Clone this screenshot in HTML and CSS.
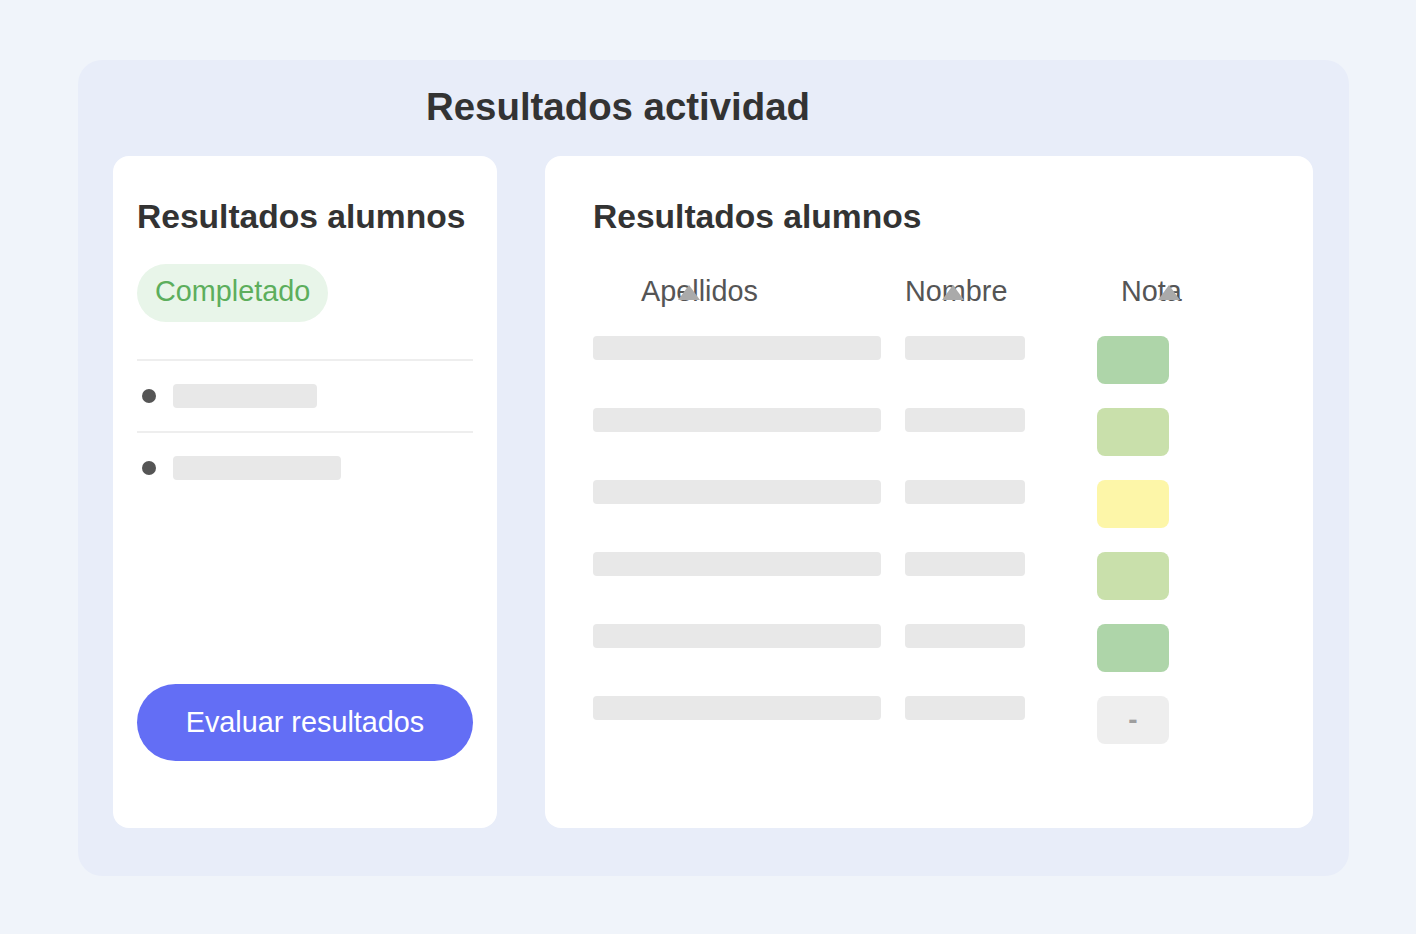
FILE: index.html
```html
<!DOCTYPE html>
<html lang="es">
<head>
<meta charset="utf-8">
<title>Resultados actividad</title>
<link rel="stylesheet" href="styles.css">
</head>
<body>
<main class="panel">
  <h1 class="panel-title">Resultados actividad</h1>
  <div class="panel-grid">
    <section class="card card-summary">
      <h2 class="card-title">Resultados alumnos</h2>
      <div class="status-row">
        <span class="badge badge-done">Completado</span>
      </div>
      <ul class="summary-list">
        <li class="summary-item"><span class="dot"></span><span class="bar bar-w144"></span></li>
        <li class="summary-item"><span class="dot"></span><span class="bar bar-w168"></span></li>
      </ul>
      <button class="btn-primary" type="button">Evaluar resultados</button>
    </section>

    <section class="card card-table">
      <h2 class="card-title">Resultados alumnos</h2>
      <div class="results">
        <div class="results-head">
          <div class="th th-apellidos"><span class="sortable">Apellidos<svg class="sort-arrow" width="22" height="15" viewBox="0 0 22 15"><polygon points="11,0 22,15 0,15" fill="#aaaaaa"/></svg></span></div>
          <div class="th"><span class="sortable">Nombre<svg class="sort-arrow" width="22" height="15" viewBox="0 0 22 15"><polygon points="11,0 22,15 0,15" fill="#aaaaaa"/></svg></span></div>
          <div class="th th-nota"><span class="sortable">Nota<svg class="sort-arrow" width="22" height="15" viewBox="0 0 22 15"><polygon points="11,0 22,15 0,15" fill="#aaaaaa"/></svg></span></div>
        </div>
        <div class="results-row">
          <span class="bar bar-surname"></span><span class="bar bar-name"></span><span class="grade grade-high"></span>
        </div>
        <div class="results-row">
          <span class="bar bar-surname"></span><span class="bar bar-name"></span><span class="grade grade-good"></span>
        </div>
        <div class="results-row">
          <span class="bar bar-surname"></span><span class="bar bar-name"></span><span class="grade grade-mid"></span>
        </div>
        <div class="results-row">
          <span class="bar bar-surname"></span><span class="bar bar-name"></span><span class="grade grade-good"></span>
        </div>
        <div class="results-row">
          <span class="bar bar-surname"></span><span class="bar bar-name"></span><span class="grade grade-high"></span>
        </div>
        <div class="results-row">
          <span class="bar bar-surname"></span><span class="bar bar-name"></span><span class="grade grade-none">-</span>
        </div>
      </div>
    </section>
  </div>
</main>
</body>
</html>
```

FILE: styles.css
```css
* {
  box-sizing: border-box;
}

html,
body {
  margin: 0;
  padding: 0;
}

body {
  background: #f0f4fa;
  font-family: "Liberation Sans", Arial, Helvetica, sans-serif;
  color: #333333;
  padding: 60px 67px 58px 78px;
}

.panel {
  width: 1271px;
  height: 816px;
  background: #e8edf9;
  border-radius: 24px;
  padding: 25px 36px 48px 35px;
  display: flex;
  flex-direction: column;
}

.panel-title {
  margin: 0 0 27px;
  padding-left: 313px;
  font-size: 38.4px;
  line-height: 44px;
  font-weight: 700;
  color: #333333;
}

.panel-grid {
  flex: 1;
  display: grid;
  grid-template-columns: 384px 768px;
  column-gap: 48px;
}

.card {
  background: #ffffff;
  border-radius: 16px;
  padding: 24px;
  display: flex;
  flex-direction: column;
}

.card-table {
  padding: 24px 48px;
}

.card-title {
  margin: 17px 0 0;
  font-size: 33.6px;
  line-height: 40px;
  font-weight: 700;
  color: #333333;
}

/* status badge */
.status-row {
  margin-top: 27px;
}

.badge {
  display: inline-flex;
  align-items: center;
  height: 58px;
  padding: 0 18px 4px;
  border-radius: 29px;
  font-size: 28.8px;
}

.badge-done {
  background: #e8f5e9;
  color: #5cae5c;
}

/* summary list */
.summary-list {
  list-style: none;
  margin: 37px 0 0;
  padding: 0;
}

.summary-item {
  display: flex;
  align-items: center;
  border-top: 2px solid #eeeeee;
  padding: 23px 0 23px;
}

.dot {
  width: 14px;
  height: 14px;
  border-radius: 50%;
  background: #555555;
  margin-left: 5px;
  margin-right: 17px;
  flex: none;
}

.bar {
  display: block;
  height: 24px;
  border-radius: 4px;
  background: #e8e8e8;
}

.bar-w144 {
  width: 144px;
}

.bar-w168 {
  width: 168px;
}

.btn-primary {
  margin-top: auto;
  margin-bottom: 43px;
  height: 77px;
  width: 100%;
  border: none;
  border-radius: 39px;
  background: #636ef5;
  color: #ffffff;
  font-family: inherit;
  font-size: 28.8px;
}

/* results table */
.results {
  margin-top: 37px;
}

.results-head,
.results-row {
  display: grid;
  grid-template-columns: 312px 192px 72px;
  align-items: start;
}

.results-head {
  margin-bottom: 28px;
}

.th {
  font-size: 28.8px;
  line-height: 34px;
  color: #555555;
}

.th-apellidos {
  padding-left: 48px;
}

.th-nota {
  padding-left: 24px;
  white-space: nowrap;
}

.sortable {
  position: relative;
  display: inline-block;
}

/* sort arrow drawn over the column label */
.sort-arrow {
  position: absolute;
  left: 37px;
  top: 11px;
  display: block;
}

.results-row {
  margin-bottom: 24px;
}

.bar-surname {
  width: 288px;
}

.bar-name {
  width: 120px;
}

.grade {
  display: flex;
  align-items: center;
  justify-content: center;
  width: 72px;
  height: 48px;
  border-radius: 8px;
}

.grade-high {
  background: #aed5a9;
}

.grade-good {
  background: #c9e0ab;
}

.grade-mid {
  background: #fdf6a8;
}

.grade-none {
  background: #eeeeee;
  color: #9e9e9e;
  font-size: 28px;
  font-weight: 700;
  line-height: 1;
}
```
